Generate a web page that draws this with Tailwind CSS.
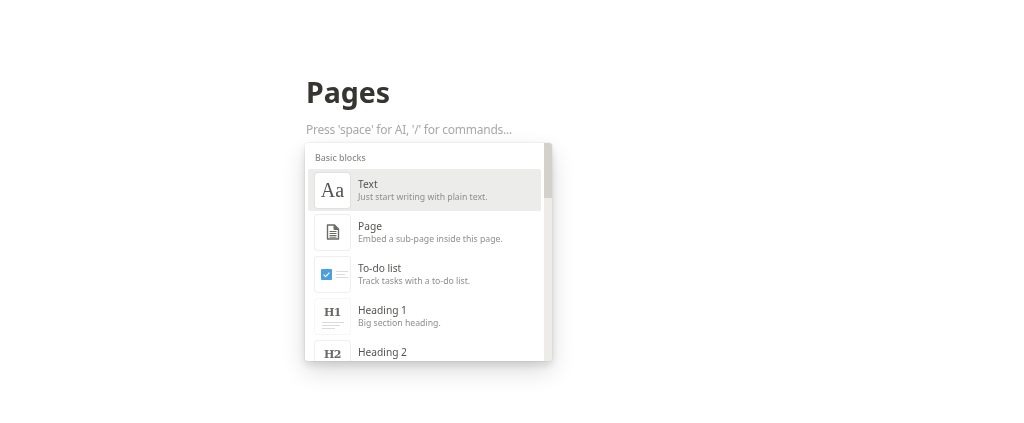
<!DOCTYPE html>
<html>
<head>
  <meta charset="utf-8">
  <meta name="viewport" content="width=device-width, initial-scale=1">
  <title>Pages</title>
  <script src="https://cdn.jsdelivr.net/npm/@tailwindcss/browser@4"></script>
</head>
<body class="bg-white overflow-hidden">
  <div class="h-[423px] pl-[306px] pt-[71px] blur-[0.4px] font-['Noto_Sans','Open_Sans',sans-serif]">
    <!-- Title -->
    <h1 class="text-[28.5px] leading-[42px] font-bold text-[#37352f]">Pages</h1>
    <p class="mt-[7px] text-[12px] leading-[20px] tracking-[-0.25px] text-[#a9a8a5]">Press 'space' for AI, '/' for commands...</p>

    <!-- Block menu -->
    <div class="mt-[3px] -ml-px w-[247px] h-[218px] flex bg-white rounded-[3px] overflow-hidden shadow-[0_0_0_1px_rgba(15,15,15,0.04),0_4px_8px_rgba(15,15,15,0.12),0_10px_24px_rgba(15,15,15,0.14)]">
      <div class="w-[239px] shrink-0 overflow-hidden">
        <div class="pl-[10px] pt-[8px] h-[26px] text-[8.8px] leading-[14px] font-medium text-[#8b8a86]">Basic blocks</div>

        <!-- Text -->
        <div class="ml-[3px] w-[233px] h-[42px] flex items-center gap-[8px] pl-[7px] rounded-[2px] bg-[#ececeb]">
          <div class="w-[35px] h-[35px] rounded-[3px] bg-white flex items-center justify-center shadow-[0_0_0_1px_rgba(15,15,15,0.05)] font-['Liberation_Serif',serif] text-[20px] text-[#55534e]">Aa</div>
          <div>
            <div class="text-[10.2px] leading-[14px] text-[#55534e]">Text</div>
            <div class="text-[8.7px] leading-[13px] text-[#8f8e8a]">Just start writing with plain text.</div>
          </div>
        </div>

        <!-- Page -->
        <div class="ml-[3px] w-[233px] h-[42px] flex items-center gap-[8px] pl-[7px]">
          <div class="w-[35px] h-[35px] rounded-[3px] bg-white flex items-center justify-center shadow-[0_0_0_1px_rgba(15,15,15,0.07)]">
            <svg width="14" height="16" viewBox="0 0 14 16">
              <path d="M1.5 1h7l4 4v10h-11z" fill="none" stroke="#6b6a66" stroke-width="1.4" stroke-linejoin="round"/>
              <path d="M8 1v4.5h4.5" fill="#6b6a66" stroke="#6b6a66"/>
              <path d="M3.5 7.5h7M3.5 9.5h7M3.5 11.5h7M3.5 13.2h7" stroke="#6b6a66" stroke-width="1"/>
            </svg>
          </div>
          <div>
            <div class="text-[10.2px] leading-[14px] text-[#55534e]">Page</div>
            <div class="text-[8.7px] leading-[13px] text-[#8f8e8a]">Embed a sub-page inside this page.</div>
          </div>
        </div>

        <!-- To-do list -->
        <div class="ml-[3px] w-[233px] h-[42px] flex items-center gap-[8px] pl-[7px]">
          <div class="w-[35px] h-[35px] rounded-[3px] bg-white flex items-center pl-[6px] gap-[4px] shadow-[0_0_0_1px_rgba(15,15,15,0.07)]">
            <svg width="11" height="11" viewBox="0 0 11 11">
              <rect width="11" height="11" rx="1" fill="#4a9fe0"/>
              <path d="M2.6 5.6l2 2 3.8-4" fill="none" stroke="#fff" stroke-width="1.2"/>
            </svg>
            <div class="flex flex-col gap-[2px]">
              <div class="w-[12px] h-px bg-[#dcdbd8]"></div>
              <div class="w-[9px] h-px bg-[#dcdbd8]"></div>
              <div class="w-[12px] h-px bg-[#dcdbd8]"></div>
            </div>
          </div>
          <div>
            <div class="text-[10.2px] leading-[14px] text-[#55534e]">To-do list</div>
            <div class="text-[8.7px] leading-[13px] text-[#8f8e8a]">Track tasks with a to-do list.</div>
          </div>
        </div>

        <!-- Heading 1 -->
        <div class="ml-[3px] w-[233px] h-[42px] flex items-center gap-[8px] pl-[7px]">
          <div class="w-[35px] h-[35px] rounded-[3px] bg-white flex flex-col items-center pt-[6px] shadow-[0_0_0_1px_rgba(15,15,15,0.04)]">
            <div class="font-['DejaVu_Serif',serif] text-[11px] leading-[15px] tracking-[-0.5px] font-bold text-[#6a6864]">H1</div>
            <div class="mt-[2px] w-[22px] flex flex-col gap-[2px]">
              <div class="w-full h-px bg-[#dcdbd8]"></div>
              <div class="w-[18px] h-px bg-[#dcdbd8]"></div>
              <div class="w-[13px] h-px bg-[#dcdbd8]"></div>
            </div>
          </div>
          <div>
            <div class="text-[10.2px] leading-[14px] text-[#55534e]">Heading 1</div>
            <div class="text-[8.7px] leading-[13px] text-[#8f8e8a]">Big section heading.</div>
          </div>
        </div>

        <!-- Heading 2 (clipped by the menu's bottom edge) -->
        <div class="ml-[3px] w-[233px] h-[42px] flex items-center gap-[8px] pl-[7px]">
          <div class="w-[35px] h-[35px] rounded-[3px] bg-white flex flex-col items-center pt-[6px] shadow-[0_0_0_1px_rgba(15,15,15,0.07)]">
            <div class="font-['DejaVu_Serif',serif] text-[11px] leading-[15px] tracking-[-0.5px] font-bold text-[#6a6864]">H2</div>
          </div>
          <div class="h-[27px]">
            <div class="text-[10.2px] leading-[14px] text-[#55534e]">Heading 2</div>
          </div>
        </div>
      </div>

      <!-- Scrollbar -->
      <div class="w-[8px] bg-[#edece9]">
        <div class="h-[55px] bg-[#d3d1cb]"></div>
      </div>
    </div>
  </div>
</body>
</html>
